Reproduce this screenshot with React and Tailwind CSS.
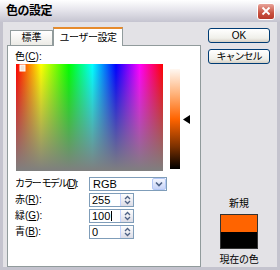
import React from 'react';

const font = { fontFamily: '"Liberation Sans", "Noto Sans CJK JP", sans-serif' };

function Spin({ value, caret }) {
  return (
    <div className="flex h-[14px] w-[45px] border border-[#7f9db9] bg-white">
      <div className="flex flex-1 items-center pl-[2px] text-[11px] leading-none text-black">
        {value}
        {caret && <span className="ml-px h-[10px] w-px bg-black" />}
      </div>
      <div className="flex w-[13px] flex-col items-center justify-center border-l border-[#c3d3fd] bg-[linear-gradient(to_bottom,#fdfdfd,#dcdce6)]">
        <svg width="7" height="10" viewBox="0 0 7 10">
          <path d="M1 4 L3.5 1.5 L6 4" fill="none" stroke="#4d6185" strokeWidth="1.3" />
          <path d="M1 6 L3.5 8.5 L6 6" fill="none" stroke="#4d6185" strokeWidth="1.3" />
        </svg>
      </div>
    </div>
  );
}

function Row({ label, children, className = '' }) {
  return (
    <div className={`flex h-[14px] items-center ${className}`}>
      <div className="w-[74px] text-[10px] leading-none text-black">{label}</div>
      {children}
    </div>
  );
}

function Btn({ children }) {
  return (
    <div className="flex h-[15px] w-[62px] items-center justify-center rounded-[3px] border border-[#003c74] bg-[linear-gradient(to_bottom,#ffffff,#f0f0ea_70%,#d6d0c5)] text-[10px] leading-none text-black">
      {children}
    </div>
  );
}

export default function App() {
  return (
    <div className="flex h-[270px] w-[280px] flex-col overflow-hidden bg-[#e3e2e6]" style={font}>
      {/* title bar */}
      <div className="flex h-[22px] shrink-0 items-center justify-between bg-[linear-gradient(to_bottom,#ffffff,#e6e5ec_45%,#c5c4d0)] pl-[6px] pr-[5px]">
        <span className="text-[12px] font-bold leading-none tracking-[-0.5px] text-black">色の設定</span>
        <div className="flex h-[17px] w-[18px] items-center justify-center rounded-[3px] border border-white bg-[linear-gradient(to_bottom,#e8a39a,#c9513f_60%,#b8392a)]">
          <svg width="10" height="10" viewBox="0 0 10 10">
            <path d="M1.5 1.5 L8.5 8.5 M8.5 1.5 L1.5 8.5" stroke="#fff" strokeWidth="1.8" />
          </svg>
        </div>
      </div>

      {/* body */}
      <div className="flex min-h-0 flex-1 border-x-[3px] border-b-[3px] border-[#c4c3ce] pl-[4px] pr-[4px]">
        {/* left: tabs */}
        <div className="flex w-[194px] flex-col pt-[4px]">
          <div className="relative z-10 flex h-[19px] items-end pl-[3px]">
            <div className="flex h-[15px] w-[43px] items-center justify-center border border-b-0 border-[#919b9c] bg-[linear-gradient(to_bottom,#ffffff,#ecebe6)] text-[10px] leading-none text-black">
              標準
            </div>
            <div className="-mb-px flex h-[19px] w-[70px] items-center justify-center border-x border-[#919b9c] border-t-[2px] border-t-[#e68b2c] bg-white text-[10px] leading-none tracking-[-0.5px] text-black">
              ユーザー設定
            </div>
          </div>
          <div className="flex flex-1 flex-col border border-[#919b9c] bg-white pb-[3px]">
            <div className="pl-[7px] pt-[4px] text-[10px] leading-[14px] text-black">
              色(<span className="underline">C</span>):
            </div>
            <div className="flex items-start pl-[8px]">
              <div className="relative h-[107px] w-[147px] bg-[linear-gradient(to_bottom,rgba(128,128,128,0),#7f7f7f),linear-gradient(to_right,#ff0000,#ffff00_17%,#00ff00_36%,#00ffff_52%,#0000ff_68%,#ff00ff_84%,#ff0000)]">
                <svg className="absolute left-[2px] top-0" width="9" height="8" viewBox="0 0 9 8">
                  <rect x="2" y="1" width="5" height="6" fill="#f3e3d8" stroke="#fff" strokeWidth="1" />
                </svg>
              </div>
              <div className="ml-[7px] mt-[5px] flex items-center">
                <div className="h-[100px] w-[10px] bg-[linear-gradient(to_bottom,#fff8f2,#ffb27a_25%,#ff6400_50%,#7a3000_78%,#000000)]" />
                <svg className="ml-[3px]" width="7" height="9" viewBox="0 0 7 9">
                  <path d="M0 4.5 L7 0 L7 9 Z" fill="#000" />
                </svg>
              </div>
            </div>

            <div className="mt-[6px] flex flex-col gap-[2px] pl-[7px]">
              <Row label={<span className="tracking-[-1.6px]">カラー モデル(<span className="underline">D</span>):</span>}>
                <div className="flex h-[14px] w-[78px] border border-[#7f9db9] bg-white">
                  <div className="flex flex-1 items-center pl-[3px] text-[11px] leading-none text-black">RGB</div>
                  <div className="flex w-[14px] items-center justify-center rounded-[2px] border border-[#b4c8f6] bg-[linear-gradient(to_bottom,#f4f6fd,#c6d3f7)]">
                    <svg width="8" height="6" viewBox="0 0 8 6">
                      <path d="M1 1.5 L4 4.5 L7 1.5" fill="none" stroke="#4d6185" strokeWidth="1.6" />
                    </svg>
                  </div>
                </div>
              </Row>
              <Row label={<span>赤(<span className="underline">R</span>):</span>}>
                <Spin value="255" />
              </Row>
              <Row label={<span>緑(<span className="underline">G</span>):</span>}>
                <Spin value="100" caret />
              </Row>
              <Row label={<span>青(<span className="underline">B</span>):</span>}>
                <Spin value="0" />
              </Row>
            </div>
          </div>
        </div>

        {/* right: buttons and preview */}
        <div className="ml-[7px] flex w-[62px] flex-col pt-[6px]">
          <div className="flex flex-col gap-[6px]">
            <Btn>OK</Btn>
            <Btn>
              <span className="tracking-[-1px]">キャンセル</span>
            </Btn>
          </div>
          <div className="mt-auto flex flex-col items-center">
            <div className="h-[14px] text-[10px] leading-[14px] text-black">新規</div>
            <div className="mt-[3px] flex h-[35px] w-[38px] flex-col border border-[#333]">
              <div className="flex-1 bg-[#ff6400]" />
              <div className="flex-1 bg-black" />
            </div>
            <div className="mt-[4px] h-[14px] text-[10px] leading-[14px] tracking-[-0.3px] text-black">現在の色</div>
          </div>
        </div>
      </div>
    </div>
  );
}
